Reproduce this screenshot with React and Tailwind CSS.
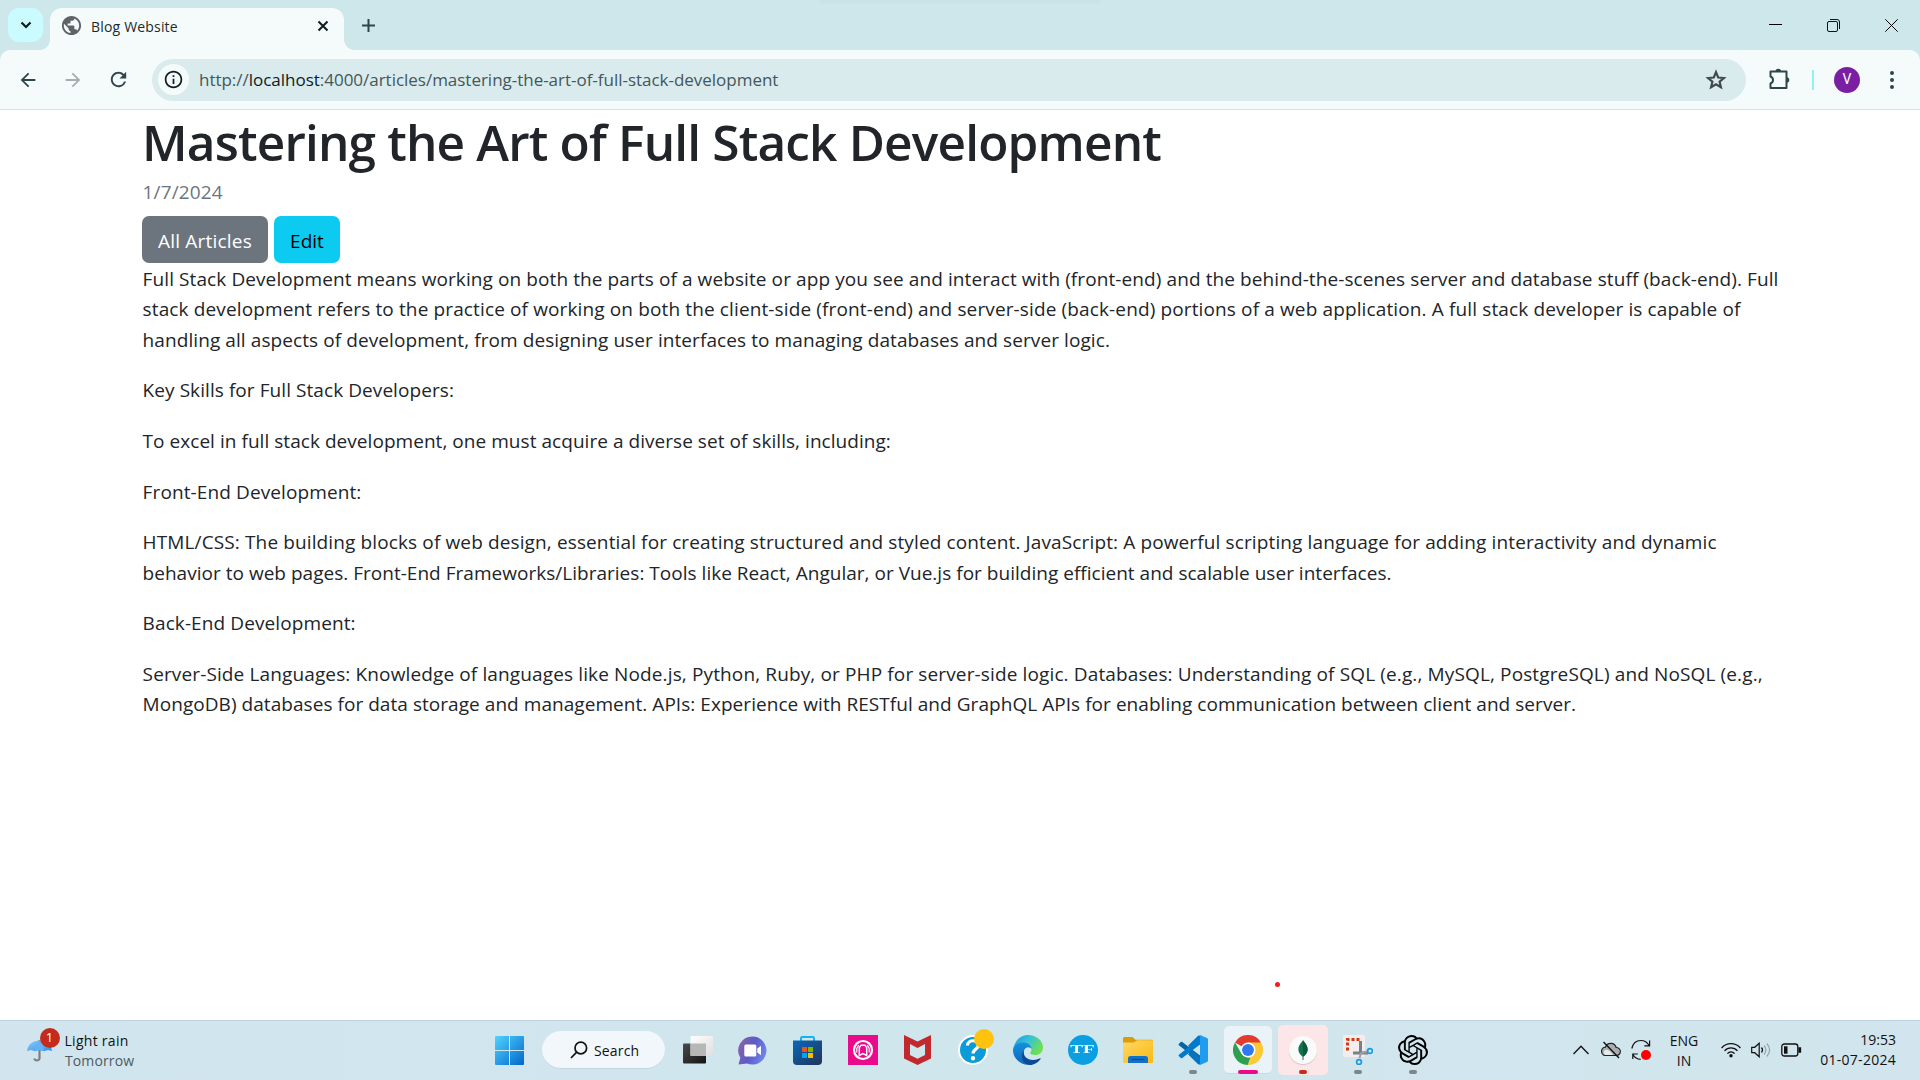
import React from "react";
import { MdArrowBack, MdArrowForward, MdInfoOutline, MdPublic, MdRefresh } from "react-icons/md";
import { SiOpenai } from "react-icons/si";

const OPEN = "font-['Open_Sans','Noto_Sans',sans-serif]";

function TabStrip() {
  return (
    <div className="relative flex h-[50px] shrink-0 bg-[#cee7ea] pt-2">
      <div className="absolute left-[820px] top-0 h-[3px] w-[280px] bg-[#c8e1e5] blur-[1px]" />
      <button className="ml-2 flex h-[34px] w-[35px] items-center justify-center rounded-[11px] bg-[#c9fbff]">
        <svg width="12" height="8" viewBox="0 0 12 8" fill="none" stroke="#0c1c1e" strokeWidth="2.2">
          <path d="M1.5 1.5 6 6l4.500-4.500" />
        </svg>
      </button>
      <div className="relative ml-[7px] flex h-[42px] w-[294px] items-center rounded-t-[12px] bg-[#f5fbfb] pb-[7px]">
        <span className="absolute -left-[10px] bottom-0 size-[10px] bg-[radial-gradient(circle_at_0_0,transparent_9.5px,#f5fbfb_10px)]" />
        <span className="absolute -right-[10px] bottom-0 size-[10px] bg-[radial-gradient(circle_at_100%_0,transparent_9.5px,#f5fbfb_10px)]" />
        <MdPublic className="ml-[10px] size-[23px] text-[#5f6368]" />
        <span className="ml-[8px] mt-[2px] text-[14px] leading-5 tracking-[0.18px] text-[#1c2b2d]">Blog Website</span>
        <svg className="ml-auto mr-[15.500px]" width="12" height="12" viewBox="0 0 12 12" stroke="#0c1c1e" strokeWidth="2">
          <path d="M1.500 1.500l9 9M10.500 1.500l-9 9" />
        </svg>
      </div>
      <svg className="ml-[18px] mt-[11px]" width="13" height="13" viewBox="0 0 13 13" stroke="#2d4649" strokeWidth="2">
        <path d="M6.500 0v13M0 6.500h13" />
      </svg>
      <div className="ml-auto mr-[22px] mt-[11px] flex gap-[45px]">
        <svg width="13" height="13" viewBox="0 0 13 13" stroke="#000"><path d="M0 5.500h13" /></svg>
        <svg width="13" height="13" viewBox="0 0 13 13" fill="none" stroke="#111">
          <rect x=".5" y="2.500" width="10" height="10" rx="1.500" />
          <path d="M3 .5h7a2.500 2.500 0 0 1 2.500 2.500v7" />
        </svg>
        <svg width="13" height="13" viewBox="0 0 13 13" stroke="#000"><path d="M.3.3l12.400 12.400M12.700.3.3 12.700" /></svg>
      </div>
    </div>
  );
}

function Toolbar() {
  return (
    <div className="h-[60px] shrink-0 bg-[#cee7ea]">
      <div className="flex h-full items-center rounded-t-[10px] border-b border-[#d3e3e5] bg-[#f5fbfb]">
        <MdArrowBack className="ml-[17px] size-[22px] text-[#2d4649]" />
        <MdArrowForward className="ml-[23px] size-[22px] text-[#a5adae]" />
        <MdRefresh className="ml-[23px] size-[23px] text-[#2d4649]" />
        <div className="ml-[22px] flex h-[42px] w-[1594px] items-center rounded-full bg-[#daebed] pl-[6px] pr-[19px]">
          <span className="flex size-[31px] items-center justify-center rounded-full bg-[#f5fbfb]">
            <MdInfoOutline className="size-[21px] text-[#101f21]" />
          </span>
          <span className="ml-[10px] text-[17px] leading-6 tracking-[-0.02px] text-[#44575a]">
            http://<span className="text-[#0e1b1d]">localhost</span>:4000/articles/mastering-the-art-of-full-stack-development
          </span>
          <svg className="ml-auto" width="22" height="22" viewBox="0 0 22 22" fill="none" stroke="#43494b" strokeWidth="2.200">
            <path d="M11 3.200l2.200 5.300 5.700.5-4.300 3.700 1.300 5.600-4.900-3-4.900 3 1.300-5.600L3.100 9l5.700-.5z" />
          </svg>
        </div>
        <svg className="ml-[22px] mb-[2px]" width="22" height="22" viewBox="0 0 22 22" fill="none" stroke="#2d4649" strokeWidth="2" strokeLinejoin="round">
          <path d="M2.500 3.500h16v16.500h-16v-4.500a3.700 3.700 0 0 0 0-7z" />
          <path d="M7.500 3.500a2.800 2.800 0 0 1 5.600 0zM18.500 9.200a2.800 2.800 0 0 1 0 5.600z" fill="#2d4649" stroke="none" />
        </svg>
        <span className="ml-[22px] h-5 w-[2px] bg-[#8df1fb]" />
        <span className="ml-[20px] flex size-[26px] items-center justify-center rounded-full bg-[#7b1fa2] font-[Roboto,sans-serif] text-[14px] text-white">V</span>
        <svg className="ml-[30px]" width="4" height="18" viewBox="0 0 4 18" fill="#2d4649">
          <circle cx="2" cy="2" r="2" /><circle cx="2" cy="9" r="2" /><circle cx="2" cy="16" r="2" />
        </svg>
      </div>
    </div>
  );
}

function Article() {
  return (
    <main className="relative min-h-0 flex-1 bg-white pl-[142px] text-[19px] leading-[30.36px] text-[#212529]">
      <h1 className="h-[61px] whitespace-nowrap pt-[2px] text-[49.5px] font-semibold leading-[61px] tracking-[-0.82px]">
        Mastering the Art of Full Stack Development
      </h1>
      <div className="mt-[6px] h-[30px] pl-[0.5px] tracking-[0.15px] text-[#6c757d]">1/7/2024</div>
      <div className="mt-[9px] flex gap-[6px]">
        <a className="flex h-[47px] w-[126px] items-center justify-center rounded-[7px] bg-[#6c757d] pt-[3px] tracking-[0.2px] text-white">All Articles</a>
        <a className="flex h-[47px] w-[66px] items-center justify-center rounded-[7px] bg-[#0dcaf0] pt-[3px] text-black">Edit</a>
      </div>
      <div className="mt-px flex flex-col gap-[20.25px] whitespace-nowrap pl-[0.6px]">
        <p>
          <span className="block tracking-[0.095px]">Full Stack Development means working on both the parts of a website or app you see and interact with (front-end) and the behind-the-scenes server and database stuff (back-end). Full</span>
          <span className="block tracking-[0.13px]">stack development refers to the practice of working on both the client-side (front-end) and server-side (back-end) portions of a web application. A full stack developer is capable of</span>
          <span className="block tracking-[0.085px]">handling all aspects of development, from designing user interfaces to managing databases and server logic.</span>
        </p>
        <p className="tracking-[0.07px]">Key Skills for Full Stack Developers:</p>
        <p className="tracking-[0.045px]">To excel in full stack development, one must acquire a diverse set of skills, including:</p>
        <p className="tracking-[0.11px]">Front-End Development:</p>
        <p>
          <span className="block tracking-[0.125px]">HTML/CSS: The building blocks of web design, essential for creating structured and styled content. JavaScript: A powerful scripting language for adding interactivity and dynamic</span>
          <span className="block tracking-[0.02px]">behavior to web pages. Front-End Frameworks/Libraries: Tools like React, Angular, or Vue.js for building efficient and scalable user interfaces.</span>
        </p>
        <p className="tracking-[0.1px]">Back-End Development:</p>
        <p>
          <span className="block tracking-[0.13px]">Server-Side Languages: Knowledge of languages like Node.js, Python, Ruby, or PHP for server-side logic. Databases: Understanding of SQL (e.g., MySQL, PostgreSQL) and NoSQL (e.g.,</span>
          <span className="block tracking-[0.05px]">MongoDB) databases for data storage and management. APIs: Experience with RESTful and GraphQL APIs for enabling communication between client and server.</span>
        </p>
      </div>
      <span className="absolute left-[1275px] top-[872px] size-[5px] rounded-full bg-[#ee1c24]" />
    </main>
  );
}

function Umbrella() {
  return (
    <svg width="26" height="26" viewBox="0 0 26 26">
      <defs><linearGradient id="umb" x1="0" x2="1" y1="0" y2="1"><stop offset="0" stopColor="#8ccbfa" /><stop offset="1" stopColor="#2f8fe8" /></linearGradient></defs>
      <path d="M12.500 3v18.500a2.700 2.700 0 0 1-5.200 0" fill="none" stroke="#7d7f84" strokeWidth="2.200" />
      <path d="M0 14C1 7 6 3.500 12.500 3.500S24 7 25 14l-4-1-4 1.200-4.500-1.200L8 14.200 4 13z" fill="url(#umb)" />
      <path d="M8 14.200C8.500 9 10 5.500 12.500 3.500 15 5.500 16.500 9 17 14.200L12.500 13z" fill="#64b1f6" />
    </svg>
  );
}

function StartIcon() {
  return (
    <svg width="29" height="29" viewBox="0 0 29 29">
      <defs><linearGradient id="win" x1="0" y1="0" x2="1" y2="1"><stop offset="0" stopColor="#52d3fc" /><stop offset="1" stopColor="#0067cc" /></linearGradient></defs>
      <path fill="url(#win)" d="M1 0h13v14H0V1a1 1 0 0 1 1-1zM15 0h13a1 1 0 0 1 1 1v13H15zM0 15h14v14H1a1 1 0 0 1-1-1zM15 15h14v13a1 1 0 0 1-1 1H15z" />
    </svg>
  );
}

function TaskViewIcon() {
  return (
    <svg width="30" height="30" viewBox="0 0 30 30">
      <defs>
        <linearGradient id="tvd" x1="0" y1="0" x2="1" y2="1"><stop offset="0" stopColor="#4a4a4a" /><stop offset="1" stopColor="#141414" /></linearGradient>
        <linearGradient id="tvl" x1="0" y1="0" x2="1" y2="1"><stop offset="0" stopColor="#fff" /><stop offset="1" stopColor="#dedede" /></linearGradient>
      </defs>
      <rect x="0" y="8.500" width="23" height="20" rx="1" fill="url(#tvd)" />
      <rect x="7.500" y="1" width="22.500" height="20" rx="1" fill="url(#tvl)" />
      <path d="M7.500 8.500H23V21H7.500z" fill="#b7b7b7" />
    </svg>
  );
}

function ChatIcon() {
  return (
    <svg width="29" height="29" viewBox="0 0 29 29">
      <defs><linearGradient id="chat" x1="0" y1=".2" x2="1" y2=".6"><stop offset="0" stopColor="#8c62a8" /><stop offset=".5" stopColor="#5b5bc8" /><stop offset="1" stopColor="#7187ee" /></linearGradient></defs>
      <path d="M14.500.5a14 14 0 1 1-5.500 26.900L.5 28.500l1.800-6.700A14 14 0 0 1 14.500.5z" fill="url(#chat)" />
      <rect x="6.300" y="8.500" width="12" height="12" rx="1.500" fill="#fff" />
      <path d="M19.300 12.500l3.700-2.800v9.600l-3.700-2.800z" fill="#fff" />
    </svg>
  );
}

function StoreIcon() {
  return (
    <svg width="29" height="29" viewBox="0 0 29 29">
      <defs><linearGradient id="store" x1="0" y1="0" x2="1" y2="1"><stop offset="0" stopColor="#0669bb" /><stop offset="1" stopColor="#253358" /></linearGradient></defs>
      <path d="M8 6V2.200C8 1.500 8.500 1 9.200 1h10.600c.7 0 1.200.5 1.200 1.200V6" fill="none" stroke="#13b4f1" strokeWidth="2" />
      <path d="M0 4.500h29V25a4 4 0 0 1-4 4H4a4 4 0 0 1-4-4z" fill="url(#store)" />
      <path d="M9 11h5v5H9z" fill="#f25022" /><path d="M15 11h5v5h-5z" fill="#7fba00" />
      <path d="M9 17h5v5H9z" fill="#00a4ef" /><path d="M15 17h5v5h-5z" fill="#ffb900" />
    </svg>
  );
}

function PinkIcon() {
  return (
    <svg width="30" height="30" viewBox="0 0 30 30">
      <path d="M0 0h30v30H0z" fill="#ea0a8c" />
      <circle cx="15" cy="15" r="9" fill="none" stroke="#fff" strokeWidth="2.200" />
      <path d="M11.300 20.500v-8l1.700-2.300h4l1.700 2.300v8L15 18.700z" fill="none" stroke="#fff" strokeWidth="1.500" />
      <path d="M8.800 17.500v-4l2-3.500M21.200 17.500v-4l-2-3.500" fill="none" stroke="#fff" strokeWidth="1.200" />
    </svg>
  );
}

function ShieldIcon() {
  return (
    <svg width="27" height="30" viewBox="0 0 27 30">
      <path d="M0 0l13.500 6.500L27 0v23.500L13.500 30 0 23.500zM6 9v11l7.500 3.800L21 20V9l-7.500 4z" fill="#c1292e" fillRule="evenodd" />
    </svg>
  );
}

function HelpIcon() {
  return (
    <span className="relative flex size-[30px] items-center justify-center rounded-full border-2 border-white bg-[#0c9bd8]">
      <svg width="16" height="22" viewBox="0 0 16 22" fill="none" stroke="#fff" strokeWidth="3.200">
        <path d="M2.500 6.500C2.500 0 13.500.5 13.500 6c0 4-5.500 4-5.500 8.500" /><circle cx="8" cy="19.200" r="1.100" strokeWidth="2.200" />
      </svg>
      <span className="absolute -right-[8px] -top-[8px] size-[20px] rounded-full bg-[#ffc20e]" />
    </span>
  );
}

function EdgeIcon() {
  return (
    <svg width="30" height="30" viewBox="0 0 30 30">
      <defs>
        <linearGradient id="eg1" x1="0" y1="0" x2="1" y2=".5"><stop offset="0" stopColor="#1a9be0" /><stop offset=".5" stopColor="#35c1d8" /><stop offset="1" stopColor="#6fe052" /></linearGradient>
        <linearGradient id="eg2" x1="0" y1="0" x2="0" y2="1"><stop offset="0" stopColor="#1490df" /><stop offset="1" stopColor="#1066b8" /></linearGradient>
      </defs>
      <path d="M.5 13C2 5 8 0 15 0c8.500 0 15 5.800 15 12.500 0 5-4 7.500-7.500 7.500-3.500 0-5.300-1-5.300-2 0-.7 1.300-1.300 1.300-3.500 0-2.500-3-5.500-8-5.500-4.500 0-7.500 1.500-10 4z" fill="url(#eg1)" />
      <path d="M.1 14C1 10 5 7.500 10 7.500c5.500 0 8.500 3.500 8.500 6.500-1-2-5-3-7 .5-3 6 1 12.500 8 15C10 31.500.5 25 0 16z" fill="url(#eg2)" />
      <path d="M11 15.500c-1.500 5 3 9.500 9 9.500 3.500 0 6-1.300 7-1.700.6-.2.9.2.6.7C25 27.500 21 30 17 30 9 29 6.500 20 11 15.500z" fill="#0c4a94" />
    </svg>
  );
}

function TfIcon() {
  return (
    <span className="flex size-[30px] items-center justify-center rounded-full bg-[#0a9fe0]">
      <span className="scale-x-[1.65] font-['Liberation_Serif',serif] text-[11.5px] font-bold leading-none text-white">TF</span>
    </span>
  );
}

function FolderIcon() {
  return (
    <svg width="30" height="28" viewBox="0 0 30 28">
      <defs><linearGradient id="fold" x1="0" y1="0" x2="1" y2="1"><stop offset="0" stopColor="#ffd866" /><stop offset="1" stopColor="#f9b912" /></linearGradient></defs>
      <path d="M0 2.500C0 1.500.7 1 1.500 1h8l3 2.700H29c.6 0 1 .5 1 1V10H0z" fill="#dc9c0a" />
      <path d="M0 6.500h11l3-2.300h15c.6 0 1 .4 1 1V26a1 1 0 0 1-1 1H1a1 1 0 0 1-1-1z" fill="url(#fold)" />
      <path d="M5 27v-4.500c0-1.500 1-2.500 2.500-2.500h15c1.500 0 2.500 1 2.500 2.500V27z" fill="#1272ca" />
      <path d="M8.500 23.500h13" stroke="#0a4f9a" strokeWidth="1.300" />
    </svg>
  );
}

function CodeIcon() {
  return (
    <svg width="30" height="30" viewBox="0 0 30 30">
      <path d="M1 8.700l1.800-1.600c.5-.4 1-.4 1.500 0L22 20.500V27L.9 10.300c-.5-.5-.4-1.100.1-1.600z" fill="#0065a9" />
      <path d="M1 21.300l1.800 1.600c.5.4 1 .4 1.500 0L22 9.500V3L.9 19.700c-.5.500-.4 1.100.1 1.600z" fill="#007acc" />
      <path d="M22 0l7 3c.6.300 1 .9 1 1.600v20.800c0 .7-.4 1.300-1 1.600l-7 3c-.6.200-1.300 0-1.700-.5.700.6 1.700.1 1.700-.9V1.400c0-1-1-1.500-1.700-.9.400-.5 1.100-.7 1.700-.5z" fill="#1f9cf0" />
      <path d="M20.300.5L10 10.800l4.500 3.600L22 8V1z" fill="#007acc" />
      <path d="M20.300 29.500L10 19.200l4.500-3.600L22 22v7z" fill="#0a72bd" />
    </svg>
  );
}

function ChromeIcon() {
  return (
    <svg width="30" height="30" viewBox="0 0 48 48">
      <path d="M24 24L3.200 12A24 24 0 0 1 44.800 12z" fill="#e33b2e" />
      <path d="M24 12h20.800A24 24 0 0 1 24 48l10.400-18z" fill="#fcc934" />
      <path d="M3.200 12l10.400 18L24 36h4.500L24 48A24 24 0 0 1 3.200 12z" fill="#2da04e" />
      <path d="M34.400 30L24 48l-.5 0L28 35z" fill="#fcc934" />
      <circle cx="24" cy="24" r="12" fill="#fff" /><circle cx="24" cy="24" r="9.500" fill="#2f78f0" />
    </svg>
  );
}

function LeafIcon() {
  return (
    <span className="flex size-[28px] items-center justify-center rounded-full bg-[#fafafa] shadow-[0_1px_1px_rgba(0,0,0,0.15)]">
      <svg width="10" height="20" viewBox="0 0 10 20">
        <path d="M5 0c1 2.500 4.600 4.500 4.600 9.300 0 4-2.800 6.200-4.100 7.200V20h-1v-3.500C3.200 15.500.4 13.300.4 9.300.4 4.500 4 2.500 5 0z" fill="#13734f" />
        <path d="M5 0c1 2.500 4.600 4.500 4.600 9.300 0 4-2.800 6.200-4.100 7.200H5z" fill="#0a5a3c" />
      </svg>
    </span>
  );
}

function SnipIcon() {
  return (
    <svg width="30" height="30" viewBox="0 0 30 30">
      <rect width="22" height="22" rx="2" fill="#f3eeee" />
      <path d="M4.500 15.500v-11H16.500" fill="none" stroke="#cf3a14" strokeWidth="3" strokeDasharray="3 2" />
      <path d="M17.500 6v13M10 18h15" stroke="#7a8088" strokeWidth="3" />
      <path d="M18 18l-1.500 5M18 18l6-1.500" stroke="#99a0a8" strokeWidth="2" />
      <circle cx="27" cy="16" r="2.400" fill="none" stroke="#1c9ae6" strokeWidth="1.700" />
      <circle cx="16" cy="27" r="2.400" fill="none" stroke="#1c9ae6" strokeWidth="1.700" />
    </svg>
  );
}

function AppCell({ children, mark, tile }) {
  return (
    <div className="relative flex h-[60px] w-[55px] shrink-0 items-center justify-center">
      <div className={"flex items-center justify-center " + (tile || "")}>{children}</div>
      {mark && <span className={"absolute bottom-[6px] h-[4px] rounded-full " + mark} />}
    </div>
  );
}

function Tray() {
  return (
    <div className="ml-auto flex h-full items-center pr-[24px]">
      <svg width="16" height="10" viewBox="0 0 16 10" fill="none" stroke="#111" strokeWidth="1.300"><path d="M.5 9L8 1.200 15.500 9" /></svg>
      <svg className="ml-[12px]" width="20" height="18" viewBox="0 0 20 18">
        <path d="M5 14.500a4.200 4.200 0 0 1-.5-8.400A5.600 5.600 0 0 1 15.200 6.500a4 4 0 0 1 .3 8z" fill="#a9adb0" stroke="#222" strokeWidth="1.200" />
        <path d="M4 14a3.500 3.500 0 0 1 0-5c3-1 6 1.500 8 5z" fill="#e6e8ea" />
        <path d="M2.500 1L18 17" stroke="#111" strokeWidth="1.400" />
      </svg>
      <svg className="ml-[10px]" width="21" height="22" viewBox="0 0 21 22" fill="none" stroke="#111" strokeWidth="1.200">
        <path d="M.8 9.500C2 4 6 1.500 9.800 1.500c3.800 0 6.700 2 8.200 5M18.600 1.500v5.300h-5.300M1.800 20v-5h5M2 15.500c1.500 3 4.500 4.800 7.700 4.800" />
        <circle cx="15" cy="16" r="5" fill="#fe0000" stroke="none" />
      </svg>
      <div className="ml-[10px] mt-px w-[44px] text-center text-[14px] leading-5 text-[#111]">ENG<br />IN</div>
      <svg className="ml-[15px]" width="20" height="16" viewBox="0 0 20 16" fill="none" stroke="#111" strokeWidth="1.300">
        <path d="M.6 6C5.500.2 14.500.2 19.400 6M3.500 8.900c3.500-4 9.500-4 13 0M6.400 11.600c2-2.400 5.200-2.400 7.200 0" />
        <circle cx="10" cy="13.700" r="1.700" fill="#111" stroke="none" />
      </svg>
      <svg className="ml-[10px]" width="20" height="16" viewBox="0 0 20 16" fill="none" stroke="#111" strokeWidth="1.200">
        <path d="M.7 5.300h3L8.200 1.200v13.600L3.700 10.700h-3z" /><path d="M10.500 5.500c1.300 1.500 1.300 3.500 0 5" />
        <path d="M13 3.500c2.300 2.700 2.300 6.300 0 9M15.800 1.500c3.500 4 3.500 9 0 13" stroke="#97a5ab" />
      </svg>
      <svg className="ml-[10px]" width="21" height="14" viewBox="0 0 21 14" fill="none" stroke="#111" strokeWidth="1.300">
        <rect x=".8" y="1" width="16" height="12" rx="2.500" /><rect x="3" y="3.300" width="3.500" height="7.400" fill="#111" stroke="none" />
        <path d="M18 5v4h1.500V5z" fill="#111" />
      </svg>
      <div className="ml-[18px] w-[76px] whitespace-nowrap text-right text-[14px] leading-5 text-[#111]">
        19:53<br /><span className="tracking-[0.27px]">01-07-2024</span>
      </div>
    </div>
  );
}

function Taskbar() {
  return (
    <div className="relative flex h-[60px] shrink-0 items-center border-t border-[#bfd3dc] bg-linear-to-r from-[#d2e5ef] via-[#cfe6ec] to-[#d2e5ee] pb-px">
      <div className="flex w-[495px] items-center pl-[27px]">
        <div className="relative">
          <Umbrella />
          <span className="absolute -top-[9px] left-[12.500px] flex size-[20px] items-center justify-center rounded-full bg-[#c42b1c] text-[13px] text-white">1</span>
        </div>
        <div className="ml-[11.500px] mt-[2px] text-[14px] leading-5 text-[#111]">
          <div className="tracking-[0.28px]">Light rain</div>
          <div className="pl-[0.5px] tracking-[0.12px] text-[#4d5a60]">Tomorrow</div>
        </div>
      </div>
      <StartIcon />
      <div className="ml-[18px] mr-[5px] flex h-[38px] w-[123px] items-center rounded-full border-b border-[#c5d6de] bg-[#f1f7fa] pl-[28px]">
        <svg width="18" height="18" viewBox="0 0 18 18" fill="none" stroke="#111" strokeWidth="1.700"><circle cx="10.800" cy="7" r="5.800" /><path d="M6.700 11.200L1 17" /></svg>
        <span className="ml-[6px] mt-[2px] text-[14px] leading-5 tracking-[0.15px] text-[#111]">Search</span>
      </div>
      <AppCell><TaskViewIcon /></AppCell>
      <AppCell><ChatIcon /></AppCell>
      <AppCell><StoreIcon /></AppCell>
      <AppCell><PinkIcon /></AppCell>
      <AppCell><ShieldIcon /></AppCell>
      <AppCell><HelpIcon /></AppCell>
      <AppCell><EdgeIcon /></AppCell>
      <AppCell><TfIcon /></AppCell>
      <AppCell><FolderIcon /></AppCell>
      <AppCell mark="w-[8px] bg-[#7d868a]"><CodeIcon /></AppCell>
      <AppCell mark="w-[20px] bg-[#ea0a8c]" tile="h-[48px] w-[48px] rounded-[5px] border-b border-[#c9dae2] bg-[#e9f3f8]"><ChromeIcon /></AppCell>
      <AppCell mark="w-[8px] bg-[#c42b1c]" tile="h-[50px] w-[50px] rounded-[5px] bg-[#fce6e8]"><LeafIcon /></AppCell>
      <AppCell mark="w-[8px] bg-[#7d868a]"><SnipIcon /></AppCell>
      <AppCell mark="w-[8px] bg-[#7d868a]"><SiOpenai className="size-[30px] text-black" /></AppCell>
      <Tray />
    </div>
  );
}

export default function App() {
  return (
    <div className={"flex h-[1080px] w-[1920px] flex-col overflow-hidden bg-white " + OPEN}>
      <TabStrip />
      <Toolbar />
      <Article />
      <Taskbar />
    </div>
  );
}
